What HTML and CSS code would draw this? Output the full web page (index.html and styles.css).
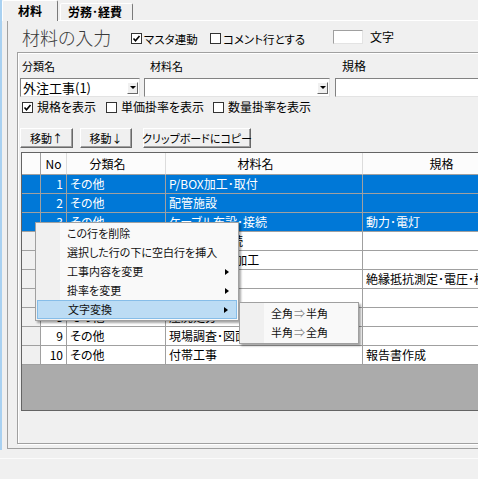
FILE: index.html
```html
<!DOCTYPE html>
<html lang="ja">
<head>
<meta charset="utf-8">
<link rel="stylesheet" href="styles.css">
</head>
<body>
<div class="win">
  <div class="app">
    <div class="tabs">
      <div class="tab sel">材料</div>
      <div class="tab">労務･経費</div>
    </div>
    <div class="panel">
      <div class="head">
        <h1 class="title">材料の入力</h1>
        <label class="chk c1"><span class="box"><svg viewBox="0 0 9 9" width="9" height="9"><polyline points="1.5,4.5 3.5,6.8 7.5,2" fill="none" stroke="#000" stroke-width="1.6"/></svg></span>マスタ連動</label>
        <label class="chk c2"><span class="box"></span>コメント行とする</label>
        <span class="tbox"></span>
        <span class="moji">文字</span>
      </div>
      <div class="group">
        <div class="labels">
          <span class="l1">分類名</span>
          <span class="l2">材料名</span>
          <span class="l3">規格</span>
        </div>
        <div class="combos">
          <div class="combo cb1"><span class="ctext">外注工事(1)</span><span class="drop"><i></i></span></div>
          <div class="combo cb2"><span class="ctext"></span><span class="drop"><i></i></span></div>
          <div class="combo cb3"></div>
        </div>
        <div class="opts">
          <label class="chk o1"><span class="box"><svg viewBox="0 0 9 9" width="9" height="9"><polyline points="1.5,4.5 3.5,6.8 7.5,2" fill="none" stroke="#000" stroke-width="1.6"/></svg></span>規格を表示</label>
          <label class="chk o2"><span class="box"></span>単価掛率を表示</label>
          <label class="chk o3"><span class="box"></span>数量掛率を表示</label>
        </div>
        <div class="btns">
          <div class="btn b1">移動↑</div>
          <div class="btn b2">移動↓</div>
          <div class="btn b3">クリップボードにコピー</div>
        </div>
        <div class="grid">
          <div class="row hdr">
            <div class="c rh"></div>
            <div class="c no">No</div>
            <div class="c cat">分類名</div>
            <div class="c name">材料名</div>
            <div class="c spec">規格</div>
            <div class="c ext"></div>
          </div>
          <div class="row sel"><div class="c rh"></div><div class="c no">1</div><div class="c cat">その他</div><div class="c name">P/BOX加工･取付</div><div class="c spec"></div><div class="c ext"></div></div>
          <div class="row sel"><div class="c rh"></div><div class="c no">2</div><div class="c cat">その他</div><div class="c name">配管施設</div><div class="c spec"></div><div class="c ext"></div></div>
          <div class="row sel"><div class="c rh"></div><div class="c no">3</div><div class="c cat">その他</div><div class="c name">ケーブル布設･接続</div><div class="c spec">動力･電灯</div><div class="c ext"></div></div>
          <div class="row"><div class="c rh"></div><div class="c no">4</div><div class="c cat">その他</div><div class="c name">ケーブル･接続</div><div class="c spec"></div><div class="c ext"></div></div>
          <div class="row"><div class="c rh"></div><div class="c no">5</div><div class="c cat">その他</div><div class="c name">ボックス取付加工</div><div class="c spec"></div><div class="c ext"></div></div>
          <div class="row"><div class="c rh"></div><div class="c no">6</div><div class="c cat">その他</div><div class="c name">試験調整</div><div class="c spec">絶縁抵抗測定･電圧･検相</div><div class="c ext"></div></div>
          <div class="row"><div class="c rh"></div><div class="c no">7</div><div class="c cat">その他</div><div class="c name">撤去工事</div><div class="c spec"></div><div class="c ext"></div></div>
          <div class="row"><div class="c rh"></div><div class="c no">8</div><div class="c cat">その他</div><div class="c name">産廃処分</div><div class="c spec"></div><div class="c ext"></div></div>
          <div class="row"><div class="c rh"></div><div class="c no">9</div><div class="c cat">その他</div><div class="c name">現場調査･図面作成</div><div class="c spec"></div><div class="c ext"></div></div>
          <div class="row"><div class="c rh"></div><div class="c no">10</div><div class="c cat">その他</div><div class="c name">付帯工事</div><div class="c spec">報告書作成</div><div class="c ext"></div></div>
          <div class="empty"></div>
        </div>
      </div>
    </div>
  </div>
  <div class="status"></div>

  <div class="menu">
    <div class="mi">この行を削除</div>
    <div class="mi">選択した行の下に空白行を挿入</div>
    <div class="mi sub">工事内容を変更<i></i></div>
    <div class="mi sub">掛率を変更<i></i></div>
    <div class="mi sub hot">文字変換<i></i></div>
  </div>
  <div class="submenu">
    <div class="mi">全角<span class="arr">⇒</span>半角</div>
    <div class="mi">半角<span class="arr">⇒</span>全角</div>
  </div>
</div>
</body>
</html>
```

FILE: styles.css
```css
* { box-sizing: border-box; }
html, body { margin: 0; padding: 0; }
body {
  width: 478px;
  height: 479px;
  overflow: hidden;
  background: #f0f0f0;
  font-family: "Noto Sans CJK JP", "Noto Sans", sans-serif;
  font-size: 12px;
  color: #000;
  font-feature-settings: "palt";
}
.win { position: relative; width: 478px; height: 479px; overflow: hidden; }
.app { height: 450px; border-left: 2px solid #a9d1f1; }

/* tabs */
.tabs { display: flex; align-items: flex-end; height: 20px; }
.tab {
  font-weight: bold;
  font-size: 12px;
  line-height: 16px;
  height: 17px;
  padding: 0 0 0 8px;
  border: 1px solid;
  border-bottom: none;
  border-color: #fff #7a7a7a transparent #fff;
  border-radius: 2px 2px 0 0;
  background: #f0f0f0;
}
.tab.sel {
  width: 56px;
  height: 21px;
  margin-bottom: -1px;
  padding-left: 15px;
  padding-top: 2px;
  position: relative;
  z-index: 1;
}
.tab:not(.sel) { width: 73px; margin-left: 2px; padding-left: 7px; }

/* panel */
.panel {
  width: 700px;
  margin-left: 5px;
  height: 429px;
  border-top: 1px solid #fff;
  border-left: 1px solid #a0a0a0;
  border-bottom: 1px solid #a0a0a0;
}
.head { height: 31px; display: flex; align-items: center; padding-left: 14px; }
.title {
  margin: 0;
  flex: 0 0 109px;
  font-size: 18px;
  font-weight: 300;
  line-height: 20px;
  color: #3a3a3a;
}
.chk { display: flex; align-items: center; gap: 2px; font-size: 12px; line-height: 14px; white-space: nowrap; }
.box {
  width: 11px; height: 11px;
  border: 1px solid #333;
  background: #fff;
  display: flex; align-items: center; justify-content: center;
  flex: 0 0 11px;
}
.head .chk { margin-top: 4px; font-size: 11.5px; }
.c1 { flex: 0 0 79px; }
.c2 { flex: 0 0 123px; }
.tbox {
  width: 30px; height: 14px;
  background: #fff;
  border: 1px solid;
  border-color: #a0a0a0 #e3e3e3 #e3e3e3 #a0a0a0;
  margin-right: 7px;
}
.moji { font-size: 12px; line-height: 14px; }

/* group box */
.group {
  margin-left: 9px;
  width: 680px;
  height: 392px;
  border: 1px solid #a0a0a0;
  box-shadow: inset 1px 1px 0 #fff, 1px 1px 0 #fff;
}
.labels { height: 25px; display: flex; align-items: center; padding-left: 4px; font-size: 11px; line-height: 14px; }
.l1 { flex: 0 0 128px; }
.l2 { flex: 0 0 192px; }
.l3 { font-size: 12px; }
.combos { height: 19px; display: flex; padding-left: 2px; }
.combo {
  height: 19px;
  background: #fff;
  border: 1px solid;
  border-color: #828282 #e3e3e3 #e3e3e3 #828282;
  display: flex;
  align-items: center;
}
.cb1 { width: 120px; }
.cb2 { width: 186px; margin-left: 4px; }
.cb3 { width: 300px; margin-left: 5px; }
.ctext { flex: 1; padding-left: 2px; font-size: 13px; line-height: 16px; font-feature-settings: normal; white-space: nowrap; }
.drop {
  width: 11px; height: 12px;
  margin-right: 1px;
  background: #f0f0f0;
  border: 1px solid;
  border-color: #fff #696969 #696969 #fff;
  display: flex; align-items: center; justify-content: center;
}
.drop i {
  display: block; width: 0; height: 0;
  border-top: 3px solid #000;
  border-left: 3px solid transparent;
  border-right: 3px solid transparent;
}
.opts { margin-top: 3px; height: 14px; display: flex; padding-left: 4px; }
.opts .chk { gap: 4px; }
.o1 { flex: 0 0 84px; }
.o2 { flex: 0 0 107px; }
.btns { margin-top: 14px; height: 20px; display: flex; padding-left: 2px; }
.btn {
  height: 20px;
  border: 1px solid;
  border-color: #fff #696969 #696969 #fff;
  box-shadow: inset -1px -1px 0 #a0a0a0;
  background: #f0f0f0;
  font-size: 11px;
  line-height: 14px;
  display: flex; align-items: center; justify-content: center;
  white-space: nowrap;
  font-feature-settings: normal;
}
.b3 { font-feature-settings: "palt"; }
.b1 { width: 53px; }
.b2 { width: 52px; margin-left: 7px; }
.b3 { width: 108px; margin-left: 11px; }

/* grid */
.grid {
  margin-top: 4px;
  margin-left: 3px;
  width: 650px;
  height: 259px;
  border: 1px solid #646464;
  background: #ababab;
  display: flex;
  flex-direction: column;
}
.row { display: flex; height: 19px; flex: 0 0 19px; background: #fff; }
.row.hdr { height: 22px; flex: 0 0 22px; background: #fcfcfc; }
.c {
  border-right: 1px solid #a0a0a0;
  border-bottom: 1px solid #a0a0a0;
  padding: 0 3px;
  font-size: 12px;
  line-height: 18px;
  white-space: nowrap;
  overflow: hidden;
}
.rh { flex: 0 0 19px; background: #f0f0f0; }
.no { flex: 0 0 26px; text-align: right; }
.cat { flex: 0 0 99px; }
.name { flex: 0 0 197px; }
.spec { flex: 0 0 175px; }
.ext { flex: 0 0 120px; }
.hdr .c { background: #fcfcfc; line-height: 21px; text-align: center; border-right-color: #dcdcdc; }
.hdr .rh { border-right-color: #a0a0a0; }
.hdr .cat, .hdr .name, .hdr .spec { padding-right: 20px; }
.row.sel .c { background: #0078d7; color: #fff; }
.empty { flex: 1; }

/* context menu */
.menu, .submenu {
  position: absolute;
  background: linear-gradient(to right, #f0f0f0 0 24px, #f9f9f9 24px);
  border: 1px solid #a0a0a0;
  box-shadow: 2px 2px 2px rgba(0,0,0,0.35);
  padding: 1px 0;
  font-size: 11px;
}
.menu { left: 35px; top: 222px; width: 204px; height: 99px; z-index: 5; }
.submenu { left: 239px; top: 302px; width: 120px; height: 42px; z-index: 6; }
.mi {
  height: 19px;
  line-height: 19px;
  padding-left: 31px;
  display: flex;
  align-items: center;
  white-space: nowrap;
  color: #111;
}
.mi.sub { justify-content: space-between; padding-right: 9px; }
.mi.sub i {
  display: block; width: 0; height: 0;
  border-left: 4px solid #000;
  border-top: 3.5px solid transparent;
  border-bottom: 3.5px solid transparent;
}
.mi.hot {
  margin: 0 1px;
  padding-left: 30px;
  padding-right: 8px;
  background: #bcdcf4;
  border: 1px solid #86bde8;
}
.submenu .mi { padding-left: 31px; }
.arr { color: #8a8a8a; padding: 0 1px; }

/* status */
.status { margin-top: 8px; height: 21px; border-top: 1px solid #fbfbfb; }
```
